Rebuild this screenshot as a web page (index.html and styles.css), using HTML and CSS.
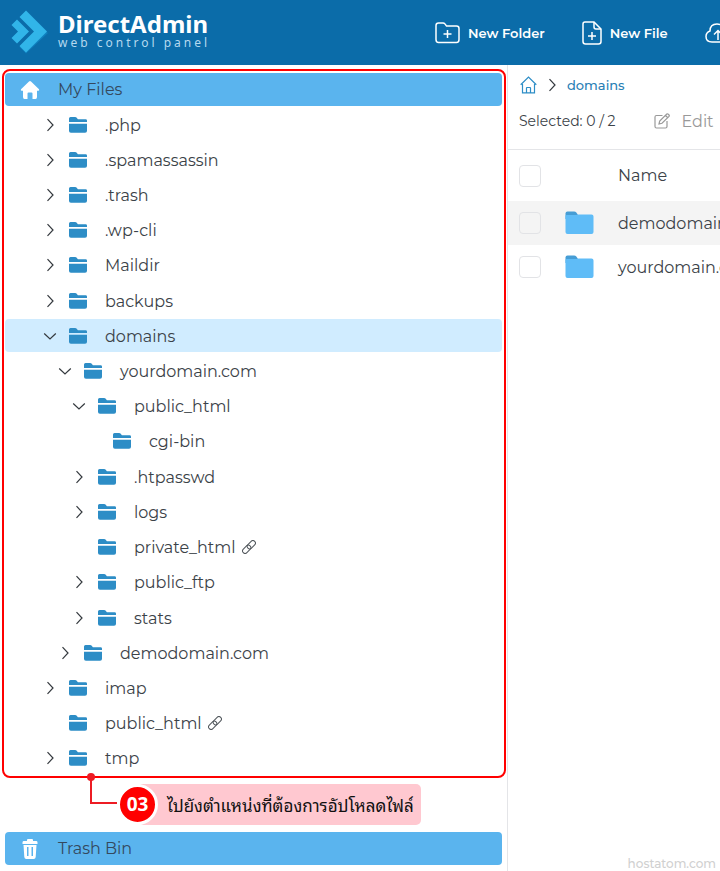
FILE: index.html
```html
<!DOCTYPE html>
<html lang="en">
<head>
    <meta charset="UTF-8">
    <meta name="viewport" content="width=device-width, initial-scale=1.0">
    <title>DirectAdmin - File Manager</title>
    <link rel="stylesheet" href="styles.css">
</head>
<body>

    <!-- Shared icons -->
    <svg class="sprite" aria-hidden="true">
        <symbol id="folder" viewBox="0 0 18 16">
            <path d="M0 5V1.500Q0 0 1.500 0H6.200Q7 0 7.500 .600L8.900 2.200H16.600Q18 2.200 18 3.600V5Z"/>
            <path d="M0 6.700H18V13.800Q18 15.700 16.100 15.700H1.900Q0 15.700 0 13.800Z"/>
        </symbol>
        <symbol id="right" viewBox="0 0 14 14">
            <path d="M4.500 1.200L10 7L4.500 12.800"/>
        </symbol>
        <symbol id="down" viewBox="0 0 14 14">
            <path d="M1.200 4.500L7 10L12.800 4.500"/>
        </symbol>
        <symbol id="chain" viewBox="0 0 14 14">
            <g transform="rotate(-45 7 7)">
                <rect x="-1" y="4.500" width="9.500" height="5" rx="2.500"/>
                <rect x="5.500" y="4.500" width="9.500" height="5" rx="2.500"/>
            </g>
        </symbol>
        <symbol id="big-folder" viewBox="0 0 29 24">
            <path fill="#469dd5" d="M.500 8V2.500Q.500 .500 2.500 .500H9Q10.500 .500 11.500 1.700L12.700 3.500V8Z"/>
            <path fill="#5fbcf7" d="M.500 4.700Q.500 4.100 2 4.100H11.500L13.500 3.500H26.500Q28.500 3.500 28.500 5.500V21Q28.500 23 26.500 23H2.500Q.500 23 .500 21Z"/>
        </symbol>
    </svg>

    <header class="topbar">
        <a class="logo" href="#">
            <svg class="logo-mark" viewBox="0 0 38 46" aria-hidden="true">
                <path fill="#0f7fbe" d="M16 43.500L9.500 37L11 36L16 41L36 21.500L38 23Z"/>
                <path fill="#31b5e9" d="M16 .500L37 21.500L16 42.500L9.500 36L24 21.500L9.500 7Z"/>
                <path fill="#31b5e9" d="M7 9.500L19 21.500L7 33.500L1.500 28L8 21.500L1.500 15Z"/>
                <path fill="none" stroke="#0b6ca9" d="M8.500 8.500L21.500 21.500L8.500 34.500"/>
            </svg>
            <span class="logo-text">
                <span class="logo-name">DirectAdmin</span>
                <span class="logo-sub">web control panel</span>
            </span>
        </a>
        <nav class="actions">
            <button type="button" class="action">
                <svg width="25" height="22" viewBox="0 0 25 22" aria-hidden="true">
                    <path d="M1 17.500V3.500Q1 1 3.500 1H8Q9.200 1 9.900 1.900L11.500 4H21.500Q24 4 24 6.500V17.500Q24 20.500 21.500 20.500H3.500Q1 20.500 1 17.500Z"/>
                    <path d="M12.500 8V16M8.500 12H16.500"/>
                </svg>
                New Folder
            </button>
            <button type="button" class="action">
                <svg width="20" height="24" viewBox="0 0 20 24" aria-hidden="true">
                    <path d="M3 1H12L19 8V20.500Q19 23 16.500 23H3.500Q1 23 1 20.500V3Q1 1 3 1Z"/>
                    <path d="M12 1V6Q12 8 14 8H19M10 11V19M6 15H14"/>
                </svg>
                New File
            </button>
            <button type="button" class="action" aria-label="Upload Files">
                <svg width="26" height="20" viewBox="0 0 26 20" aria-hidden="true">
                    <path d="M7 19Q1 19 1 13.500Q1 9.500 5 8Q5 1 12 1Q18 1 19.500 6.500Q25 7 25 13Q25 19 19 19Z"/>
                    <path d="M13 17V7.500M9 11.500L13 7.500L17 11.500"/>
                </svg>
            </button>
        </nav>
    </header>

    <div class="layout">
        <aside class="sidebar">
            <div class="tree-frame">
                <button type="button" class="bar">
                    <svg width="20" height="20" viewBox="0 0 20 20" aria-hidden="true">
                        <path d="M9 1.400Q10 .500 11 1.400L19 9.300Q19.600 10.500 18.500 10.700H17V17Q17 19 15.500 19H12.500V13.500Q12.500 12.500 11.500 12.500H8.500Q7.500 12.500 7.500 13.500V19H4.500Q3 19 3 17V10.700H1.500Q.400 10.500 1 9.300Z"/>
                    </svg>
                    My Files
                </button>
                <ul class="tree">
                    <li class="item"><svg class="arrow"><use href="#right"/></svg><svg class="folder"><use href="#folder"/></svg><a href="#">.php</a></li>
                    <li class="item"><svg class="arrow"><use href="#right"/></svg><svg class="folder"><use href="#folder"/></svg><a href="#">.spamassassin</a></li>
                    <li class="item"><svg class="arrow"><use href="#right"/></svg><svg class="folder"><use href="#folder"/></svg><a href="#">.trash</a></li>
                    <li class="item"><svg class="arrow"><use href="#right"/></svg><svg class="folder"><use href="#folder"/></svg><a href="#">.wp-cli</a></li>
                    <li class="item"><svg class="arrow"><use href="#right"/></svg><svg class="folder"><use href="#folder"/></svg><a href="#">Maildir</a></li>
                    <li class="item"><svg class="arrow"><use href="#right"/></svg><svg class="folder"><use href="#folder"/></svg><a href="#">backups</a></li>
                    <li class="item active"><svg class="arrow"><use href="#down"/></svg><svg class="folder"><use href="#folder"/></svg><a href="#">domains</a></li>
                    <li class="item level-2"><svg class="arrow"><use href="#down"/></svg><svg class="folder"><use href="#folder"/></svg><a href="#">yourdomain.com</a></li>
                    <li class="item level-3"><svg class="arrow"><use href="#down"/></svg><svg class="folder"><use href="#folder"/></svg><a href="#">public_html</a></li>
                    <li class="item level-4"><svg class="arrow"></svg><svg class="folder"><use href="#folder"/></svg><a href="#">cgi-bin</a></li>
                    <li class="item level-3"><svg class="arrow"><use href="#right"/></svg><svg class="folder"><use href="#folder"/></svg><a href="#">.htpasswd</a></li>
                    <li class="item level-3"><svg class="arrow"><use href="#right"/></svg><svg class="folder"><use href="#folder"/></svg><a href="#">logs</a></li>
                    <li class="item level-3"><svg class="arrow"></svg><svg class="folder"><use href="#folder"/></svg><a href="#">private_html</a><svg class="chain"><use href="#chain"/></svg></li>
                    <li class="item level-3"><svg class="arrow"><use href="#right"/></svg><svg class="folder"><use href="#folder"/></svg><a href="#">public_ftp</a></li>
                    <li class="item level-3"><svg class="arrow"><use href="#right"/></svg><svg class="folder"><use href="#folder"/></svg><a href="#">stats</a></li>
                    <li class="item level-2"><svg class="arrow"><use href="#right"/></svg><svg class="folder"><use href="#folder"/></svg><a href="#">demodomain.com</a></li>
                    <li class="item"><svg class="arrow"><use href="#right"/></svg><svg class="folder"><use href="#folder"/></svg><a href="#">imap</a></li>
                    <li class="item"><svg class="arrow"></svg><svg class="folder"><use href="#folder"/></svg><a href="#">public_html</a><svg class="chain"><use href="#chain"/></svg></li>
                    <li class="item"><svg class="arrow"><use href="#right"/></svg><svg class="folder"><use href="#folder"/></svg><a href="#">tmp</a></li>
                </ul>
            </div>

            <!-- Step note under the tree -->
            <div class="step">
                <svg class="step-line" width="32" height="34" viewBox="0 0 32 34" aria-hidden="true">
                    <circle cx="5" cy="5" r="4" fill="#ed1c24"/>
                    <path d="M5 5V31H31" fill="none" stroke="#ed1c24" stroke-width="2"/>
                </svg>
                <span class="step-number">03</span>
                <p class="step-text" lang="th">ไปยังตำแหน่งที่ต้องการอัปโหลดไฟล์</p>
            </div>

            <button type="button" class="bar trash">
                <svg width="20" height="22" viewBox="0 0 20 22" aria-hidden="true">
                    <path fill-rule="evenodd" d="M7 3V2Q7 1 8 1H12Q13 1 13 2V3H16.500Q17.500 3 17.500 4.500V6H2.500V4.500Q2.500 3 3.500 3ZM3.500 7H16.500L15.700 19Q15.500 21 13.700 21H6.300Q4.500 21 4.300 19ZM7 9V18H8.500V9ZM11.500 9V18H13V9Z"/>
                </svg>
                Trash Bin
            </button>
        </aside>

        <main class="content">
            <nav class="crumbs">
                <a href="#" aria-label="Home">
                    <svg width="17" height="18" viewBox="0 0 17 18" aria-hidden="true">
                        <path d="M.700 8.700L8.500 1L16.300 8.700M2.500 8V16.800H14.500V8M6.500 16.500V12Q6.500 11.500 7 11.500H10Q10.500 11.500 10.500 12V16.500"/>
                    </svg>
                </a>
                <svg class="arrow"><use href="#right"/></svg>
                <a href="#">domains</a>
            </nav>
            <div class="tools">
                <span class="selected">Selected: 0 / 2</span>
                <button type="button" class="edit" disabled>
                    <svg width="16" height="16" viewBox="0 0 16 16" aria-hidden="true">
                        <path d="M8.500 2.500H2.500Q1 2.500 1 4V13.500Q1 15 2.500 15H11.500Q13 15 13 13.500V8M5 11L5.700 8L12.800 1Q13.500 .500 14.300 1.200L15 2Q15.600 2.700 15 3.400L8 10.300ZM11.500 2.500L13.500 4.500"/>
                    </svg>
                    Edit
                </button>
            </div>
            <table class="files">
                <thead>
                    <tr>
                        <th class="check"><input type="checkbox" aria-label="Select all"></th>
                        <th class="type"></th>
                        <th>Name</th>
                    </tr>
                </thead>
                <tbody>
                    <tr class="odd">
                        <td><input type="checkbox" aria-label="Select demodomain.com"></td>
                        <td><svg class="big-folder"><use href="#big-folder"/></svg></td>
                        <td>demodomain.com</td>
                    </tr>
                    <tr>
                        <td><input type="checkbox" aria-label="Select yourdomain.com"></td>
                        <td><svg class="big-folder"><use href="#big-folder"/></svg></td>
                        <td>yourdomain.com</td>
                    </tr>
                </tbody>
            </table>
            <p class="watermark">hostatom.com</p>
        </main>
    </div>

</body>
</html>
```

FILE: styles.css
```css
* {
    margin: 0;
    padding: 0;
    box-sizing: border-box;
}

body {
    display: flex;
    flex-direction: column;
    min-height: 100vh;
    font-family: Montserrat, Inter, "Noto Sans", sans-serif;
    font-size: 16px;
    color: #3b4248;
    background-color: #ffffff;
    overflow-x: hidden;
}

a {
    color: inherit;
    text-decoration: none;
}

button {
    font-family: inherit;
    border: none;
    background: none;
    cursor: pointer;
}

svg {
    flex: none;
    display: block;
}

.sprite {
    position: absolute;
    width: 0;
    height: 0;
}

/* Top bar */
.topbar {
    display: flex;
    align-items: center;
    height: 65px;
    padding-left: 10px;
    background-color: #0b6ca9;
    color: #ffffff;
    overflow: hidden;
}

.logo {
    display: flex;
    align-items: center;
    gap: 10px;
    flex: 0 0 425px;
}

.logo-mark {
    width: 38px;
    height: 46px;
}

.logo-text {
    display: flex;
    flex-direction: column;
    padding-bottom: 4px;
}

.logo-name {
    font-family: "Noto Sans", sans-serif;
    font-size: 24px;
    font-weight: 700;
    line-height: 24px;
}

.logo-sub {
    font-family: "Noto Sans", sans-serif;
    font-size: 12px;
    line-height: 14px;
    letter-spacing: 3px;
    color: #b5d9ef;
}

.actions {
    display: flex;
    gap: 37px;
}

.action {
    display: flex;
    align-items: center;
    gap: 8px;
    font-size: 13px;
    font-weight: 600;
    color: #ffffff;
    white-space: nowrap;
}

.action svg {
    fill: none;
    stroke: #ffffff;
    stroke-width: 1.5;
}

.layout {
    display: flex;
    flex: 1;
}

/* Sidebar */
.sidebar {
    display: flex;
    flex-direction: column;
    flex: 0 0 508px;
    padding: 4px 1px 6px 2px;
    border-right: 1px solid #e4e5e8;
}

.tree-frame {
    display: flex;
    flex-direction: column;
    flex: 1;
    padding: 2px 2px 0 1px;
    border: 2px solid #ff0000;
    border-radius: 8px;
}

.bar {
    display: flex;
    align-items: center;
    gap: 18px;
    height: 33px;
    padding-left: 15px;
    border-radius: 4px;
    background-color: #5ab4ee;
    font-size: 16px;
    color: #34495e;
}

.bar svg {
    fill: #ffffff;
}

.trash {
    margin: 0 4px 0 3px;
}

.tree {
    flex: 1;
    display: grid;
    grid-auto-rows: minmax(33px, 1fr);
    align-items: center;
    padding-top: 1px;
    list-style: none;
}

.item {
    display: flex;
    align-items: center;
    height: 33px;
    padding-left: 38px;
    border-radius: 4px;
}

.item a {
    padding-top: 1px;
}

.item.active {
    background-color: #d0ecff;
}

.level-2 {
    padding-left: 53px;
}

.level-3 {
    padding-left: 67px;
}

.level-4 {
    padding-left: 82px;
}

.arrow {
    width: 14px;
    height: 14px;
    fill: none;
    stroke: #34393e;
    stroke-width: 1.2;
}

.folder {
    width: 18px;
    height: 16px;
    margin: 0 18px 0 12px;
    fill: #2d8dc6;
}

.chain {
    width: 14px;
    height: 14px;
    margin-left: 6px;
    fill: none;
    stroke: #50565b;
    overflow: visible;
}

/* Step note */
.step {
    position: relative;
    display: flex;
    align-items: center;
    height: 54px;
    padding: 0 0 2px 115px;
}

.step-line {
    position: absolute;
    left: 84px;
    top: -6px;
}

.step-number {
    z-index: 1;
    display: flex;
    align-items: center;
    justify-content: center;
    width: 41px;
    height: 41px;
    border: 3px solid #ffffff;
    border-radius: 50%;
    background-color: #ff0000;
    color: #ffffff;
    font-family: "Noto Sans", sans-serif;
    font-size: 19px;
    font-weight: 700;
}

.step-text {
    height: 41px;
    margin-left: -20px;
    padding: 0 7px 0 29px;
    border-radius: 5px;
    background-color: #ffc8d0;
    color: #111111;
    font-family: "Noto Sans Thai Looped", Loma, Garuda, Waree, "Noto Sans Thai", sans-serif;
    font-size: 17px;
    line-height: 41px;
    white-space: nowrap;
}

/* File list */
.content {
    position: relative;
    flex: 1;
    min-width: 0;
    overflow: hidden;
}

.crumbs {
    display: flex;
    align-items: center;
    gap: 8px;
    height: 40px;
    padding-left: 12px;
    font-size: 13px;
    font-weight: 500;
    color: #2980b5;
}

.crumbs a svg {
    fill: none;
    stroke: #2d8dc6;
    stroke-width: 1.2;
}

.tools {
    display: flex;
    align-items: center;
    gap: 38px;
    height: 45px;
    padding: 0 11px 12px;
    border-bottom: 1px solid #e4e5e8;
    white-space: nowrap;
}

.selected {
    font-size: 14px;
}

.edit {
    display: flex;
    align-items: center;
    gap: 12px;
    font-size: 16px;
    color: #999999;
}

.edit svg {
    fill: none;
    stroke: #999999;
    stroke-width: 1.2;
}

.files {
    width: 100%;
    table-layout: fixed;
    border-collapse: collapse;
    white-space: nowrap;
}

.files th {
    height: 51px;
    font-weight: 400;
    text-align: left;
}

.files td {
    height: 44px;
}

.files .check {
    width: 57px;
}

.files .type {
    width: 53px;
}

.files th:first-child,
.files td:first-child {
    padding-left: 11px;
}

.odd {
    background-color: #f4f4f4;
}

input[type="checkbox"] {
    display: block;
    appearance: none;
    width: 22px;
    height: 22px;
    border: 1px solid #e2e3e6;
    border-radius: 4px;
}

.big-folder {
    width: 29px;
    height: 24px;
}

.watermark {
    position: absolute;
    right: 4px;
    bottom: 0;
    font-size: 12px;
    font-weight: 500;
    color: #d0d0d0;
}
```
